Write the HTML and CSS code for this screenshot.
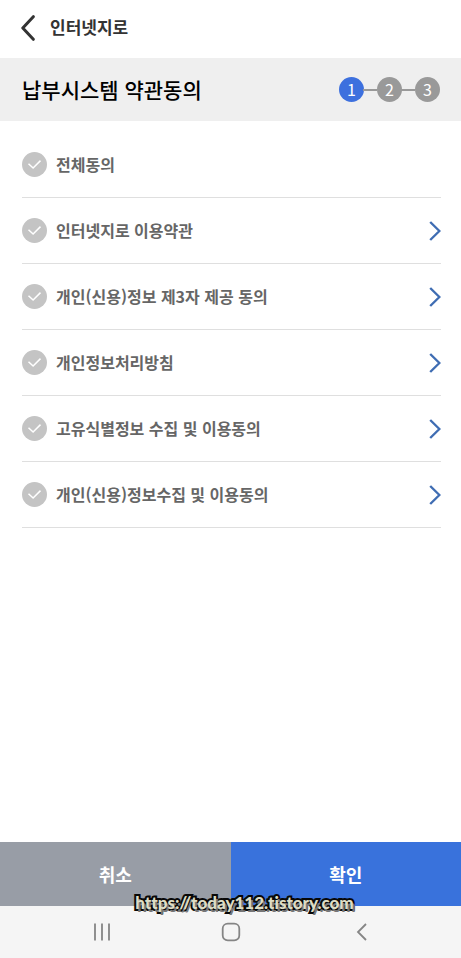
FILE: index.html
```html
<!DOCTYPE html>
<html lang="ko">
<head>
<meta charset="utf-8">
<meta name="viewport" content="width=device-width, initial-scale=1">
<title>인터넷지로</title>
<link rel="stylesheet" href="styles.css">
</head>
<body>
<svg class="sprite" aria-hidden="true">
  <symbol id="check" viewBox="0 0 25 25"><path d="M6.5 11.7l4.6 4.3 7.4-7.4"/></symbol>
  <symbol id="next" viewBox="0 0 12 20"><path d="M1.2 1l9.2 9-9.2 9"/></symbol>
</svg>
<header class="topbar">
  <button class="back" type="button" aria-label="뒤로">
    <svg viewBox="0 0 14 26"><path d="M12.3 1.7L1.8 13l10.5 11.3"/></svg>
  </button>
  <span class="app-name">인터넷지로</span>
</header>
<section class="title-bar">
  <h1>납부시스템 약관동의</h1>
  <ol class="steps">
    <li class="step current" aria-current="step">1</li>
    <li class="step">2</li>
    <li class="step">3</li>
  </ol>
</section>
<main class="terms">
  <div class="term">
    <label class="agree"><span class="tick"><input type="checkbox"><svg><use href="#check"/></svg></span><span class="name">전체동의</span></label>
  </div>
  <div class="term">
    <label class="agree"><span class="tick"><input type="checkbox"><svg><use href="#check"/></svg></span><span class="name">인터넷지로 이용약관</span></label>
    <a class="more" href="#" aria-label="인터넷지로 이용약관 보기"><svg><use href="#next"/></svg></a>
  </div>
  <div class="term">
    <label class="agree"><span class="tick"><input type="checkbox"><svg><use href="#check"/></svg></span><span class="name">개인(신용)정보 제3자 제공 동의</span></label>
    <a class="more" href="#" aria-label="개인(신용)정보 제3자 제공 동의 보기"><svg><use href="#next"/></svg></a>
  </div>
  <div class="term">
    <label class="agree"><span class="tick"><input type="checkbox"><svg><use href="#check"/></svg></span><span class="name">개인정보처리방침</span></label>
    <a class="more" href="#" aria-label="개인정보처리방침 보기"><svg><use href="#next"/></svg></a>
  </div>
  <div class="term">
    <label class="agree"><span class="tick"><input type="checkbox"><svg><use href="#check"/></svg></span><span class="name">고유식별정보 수집 및 이용동의</span></label>
    <a class="more" href="#" aria-label="고유식별정보 수집 및 이용동의 보기"><svg><use href="#next"/></svg></a>
  </div>
  <div class="term">
    <label class="agree"><span class="tick"><input type="checkbox"><svg><use href="#check"/></svg></span><span class="name">개인(신용)정보수집 및 이용동의</span></label>
    <a class="more" href="#" aria-label="개인(신용)정보수집 및 이용동의 보기"><svg><use href="#next"/></svg></a>
  </div>
</main>
<footer class="bottom">
  <div class="actions">
    <button class="cancel" type="button">취소</button>
    <button class="confirm" type="button">확인</button>
  </div>
  <nav class="system-nav">
    <button type="button" aria-label="최근 앱"><svg viewBox="0 0 20 20"><path d="M3 1.5v17M10 1.5v17M17 1.5v17"/></svg></button>
    <button type="button" aria-label="홈"><svg viewBox="0 0 20 20"><rect x="1.7" y="1.7" width="16.6" height="16.6" rx="5"/></svg></button>
    <button type="button" aria-label="이전"><svg viewBox="0 0 20 20"><path d="M16 2L8 10l8 8"/></svg></button>
  </nav>
  <span class="watermark">https://today112.tistory.com</span>
</footer>
</body>
</html>
```

FILE: styles.css
```css
* { box-sizing: border-box; }
body {
  margin: 0;
  min-height: 100vh;
  display: flex;
  flex-direction: column;
  background: #fff;
  color: #333;
  font-family: "Noto Sans CJK KR", sans-serif;
  font-weight: 500;
}
button { border: 0; padding: 0; background: none; font: inherit; color: inherit; }
svg { display: block; fill: none; stroke: currentColor; }
.sprite { position: absolute; width: 0; height: 0; }

.topbar { display: flex; align-items: center; gap: 15px; height: 58px; padding: 0 21px 2px; font-size: 17px; line-height: 24px; font-weight: 700; }
.app-name, h1, .name { padding-bottom: 2px; }
.back svg { width: 14px; height: 26px; stroke-width: 3; stroke-linecap: round; stroke-linejoin: round; }

.title-bar { display: flex; align-items: center; justify-content: space-between; height: 63px; padding: 0 21px 0 22px; background: #efefef; }
h1 { margin: 0; font-size: 21px; line-height: 30px; font-weight: 500; color: #000; }
.steps { display: flex; margin: 0; padding: 0; list-style: none; }
.step {
  display: flex;
  align-items: center;
  justify-content: center;
  width: 25px;
  height: 25px;
  padding-bottom: 2px;
  border-radius: 50%;
  background: #999;
  color: #fff;
  font-size: 16px;
  line-height: 24px;
  font-weight: 400;
  position: relative;
}
.step + .step { margin-left: 13px; }
.step + .step::before { content: ""; position: absolute; right: 100%; top: 12px; width: 14px; height: 2px; background: #999; }
.current { background: #3d70de; }

.terms { flex: 1; padding: 11px 20px 11px 22px; }
.term { display: flex; align-items: center; justify-content: space-between; height: 66px; border-bottom: 1px solid #dfdfdf; }
.agree { display: flex; align-items: center; gap: 9px; color: #666; font-size: 16px; line-height: 24px; font-weight: 700; }
.tick { display: grid; width: 25px; height: 25px; }
.tick > * { grid-area: 1 / 1; width: 25px; height: 25px; }
.tick input { appearance: none; margin: 0; border-radius: 50%; background: #c4c4c4; }
.tick input:checked { background: #3d70de; }
.tick svg { color: #fff; stroke-width: 1.5; pointer-events: none; }
.more { color: #3f6db3; }
.more svg { width: 12px; height: 20px; stroke-width: 2.4; }

.bottom { position: relative; }
.actions { display: grid; grid-template-columns: 1fr 1fr; height: 64px; color: #fff; font-size: 18px; line-height: 26px; font-weight: 700; }
.cancel { background: #989da6; }
.confirm { background: #3972dc; }
.system-nav { display: flex; justify-content: space-around; align-items: center; height: 52px; padding: 0 37px; background: #f5f5f5; color: #858585; }
.system-nav svg { width: 20px; height: 20px; stroke-width: 1.8; }
.watermark {
  position: absolute;
  top: 49px;
  left: 0;
  right: 0;
  padding-left: 28px;
  text-align: center;
  font-family: Lato, sans-serif;
  font-weight: 900;
  font-size: 17px;
  line-height: 24px;
  font-variant-ligatures: none;
  color: #deddc4;
  -webkit-text-stroke: 4px #080808;
  paint-order: stroke fill;
  stroke-linejoin: round;
  text-shadow: 2px 3px 0 #777;
}
```
